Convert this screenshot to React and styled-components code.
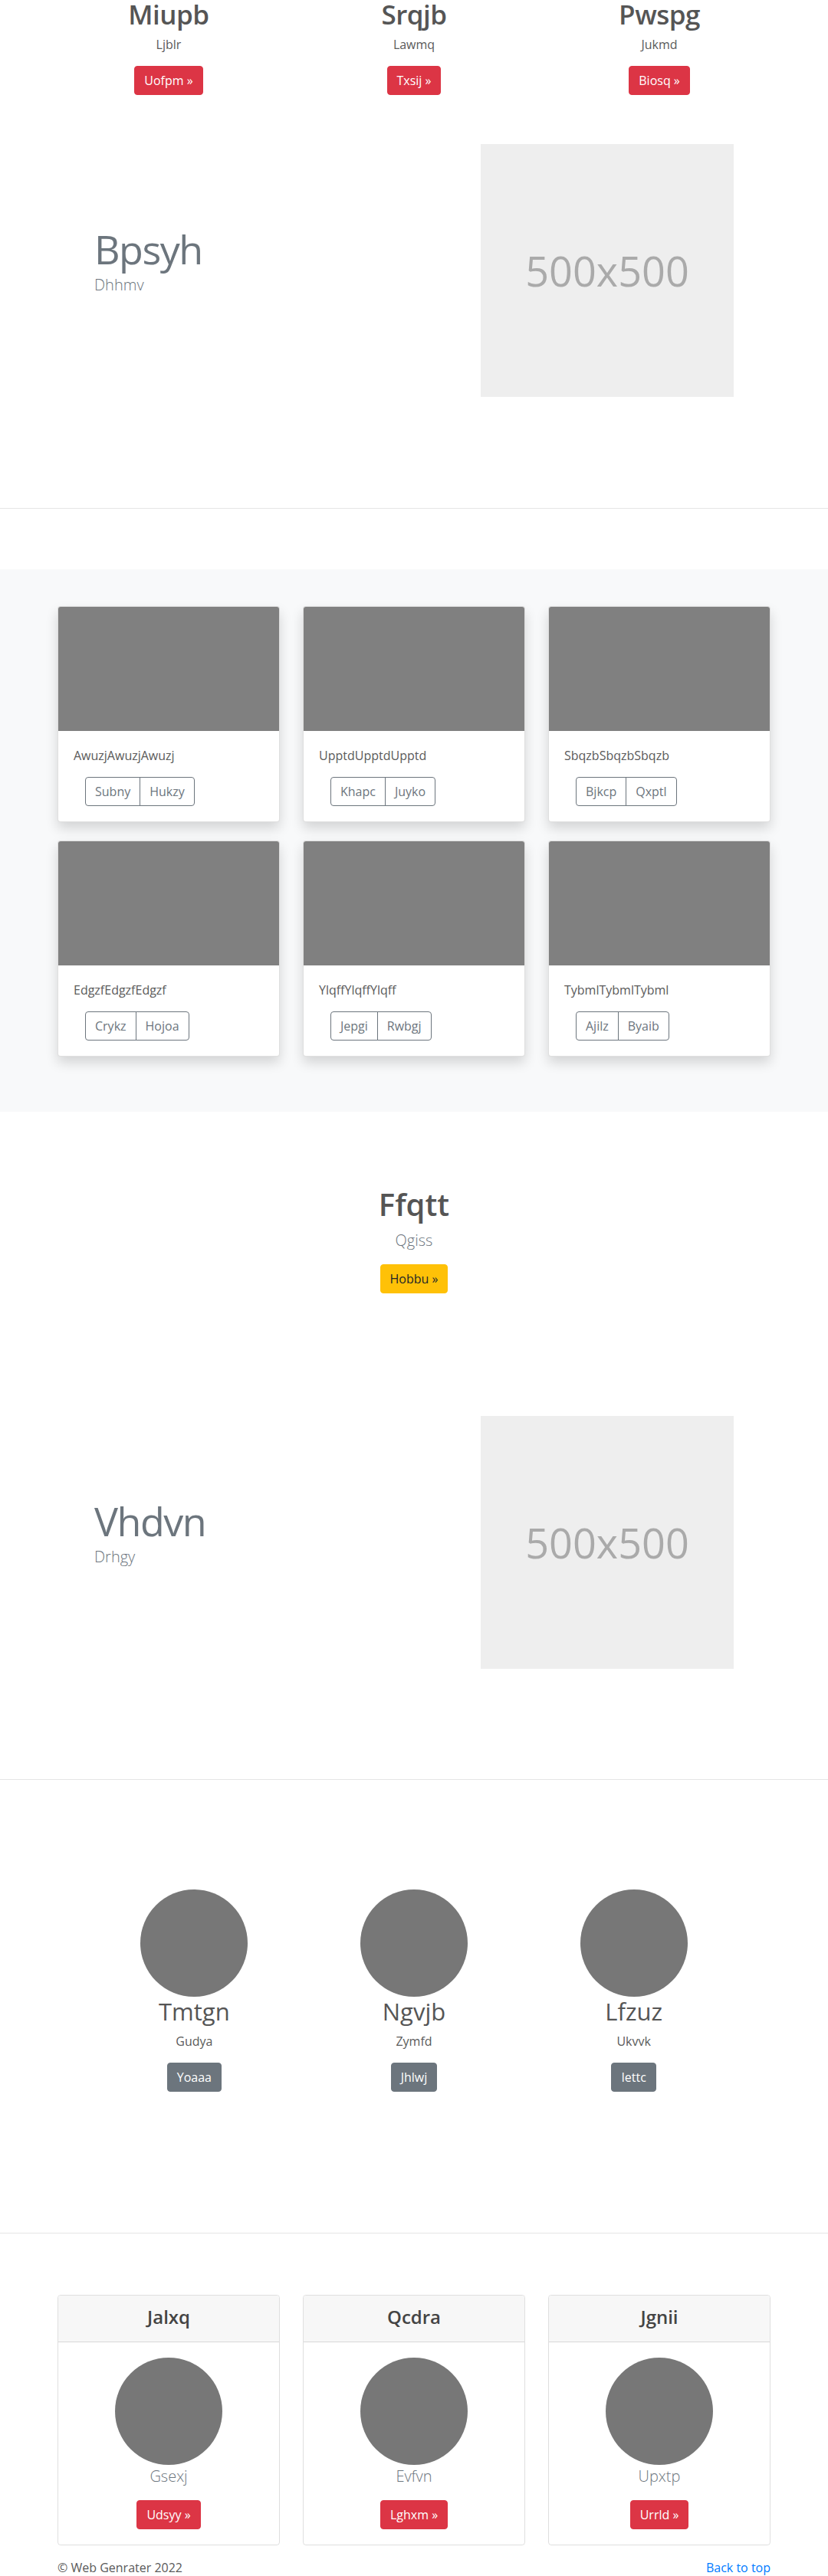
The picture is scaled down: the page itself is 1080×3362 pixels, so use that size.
import React from 'react';
import styled, { createGlobalStyle, css } from 'styled-components';

const GlobalStyle = createGlobalStyle`
  * { box-sizing: border-box; }
  body {
    margin: 0;
    font-family: "Open Sans", "Noto Sans", "Liberation Sans", Arial, sans-serif;
    font-size: 16px;
    line-height: 1.5;
    color: #5a5a5a;
    background: #fff;
  }
`;

const marketing = [
  { title: 'Miupb', text: 'Ljblr', btn: 'Uofpm »' },
  { title: 'Srqjb', text: 'Lawmq', btn: 'Txsij »' },
  { title: 'Pwspg', text: 'Jukmd', btn: 'Biosq »' },
];

const albumCards = [
  { text: 'AwuzjAwuzjAwuzj', a: 'Subny', b: 'Hukzy' },
  { text: 'UpptdUpptdUpptd', a: 'Khapc', b: 'Juyko' },
  { text: 'SbqzbSbqzbSbqzb', a: 'Bjkcp', b: 'Qxptl' },
  { text: 'EdgzfEdgzfEdgzf', a: 'Crykz', b: 'Hojoa' },
  { text: 'YlqffYlqffYlqff', a: 'Jepgi', b: 'Rwbgj' },
  { text: 'TybmlTybmlTybml', a: 'Ajilz', b: 'Byaib' },
];

const team = [
  { name: 'Tmtgn', role: 'Gudya', btn: 'Yoaaa' },
  { name: 'Ngvjb', role: 'Zymfd', btn: 'Jhlwj' },
  { name: 'Lfzuz', role: 'Ukvvk', btn: 'Iettc' },
];

const plans = [
  { head: 'Jalxq', text: 'Gsexj', btn: 'Udsyy »' },
  { head: 'Qcdra', text: 'Evfvn', btn: 'Lghxm »' },
  { head: 'Jgnii', text: 'Upxtp', btn: 'Urrld »' },
];

export default function App() {
  return (
    <Page>
      <GlobalStyle />
      <Container>
        <ThreeCols>
          {marketing.map((m) => (
            <Centered key={m.title}>
              <MarketingTitle>{m.title}</MarketingTitle>
              <BodyText>{m.text}</BodyText>
              <Button $variant="danger">{m.btn}</Button>
            </Centered>
          ))}
        </ThreeCols>

        <Featurette $top={64}>
          <FeatureText>
            <FeatureHeading>Bpsyh</FeatureHeading>
            <Lead>Dhhmv</Lead>
          </FeatureText>
          <Placeholder>500x500</Placeholder>
        </Featurette>
      </Container>

      <Divider $top={145} />

      <AlbumSection>
        <Container>
          <CardGrid>
            {albumCards.map((c) => (
              <AlbumCard key={c.text}>
                <CardImage />
                <CardBody>
                  <BodyText>{c.text}</BodyText>
                  <BtnGroup>
                    <OutlineButton>{c.a}</OutlineButton>
                    <OutlineButton>{c.b}</OutlineButton>
                  </BtnGroup>
                </CardBody>
              </AlbumCard>
            ))}
          </CardGrid>
        </Container>
      </AlbumSection>

      <Container>
        <Hero>
          <HeroTitle>Ffqtt</HeroTitle>
          <HeroLead>Qgiss</HeroLead>
          <Button $variant="warning">Hobbu »</Button>
        </Hero>

        <Featurette $top={160}>
          <FeatureText>
            <FeatureHeading>Vhdvn</FeatureHeading>
            <Lead>Drhgy</Lead>
          </FeatureText>
          <Placeholder>500x500</Placeholder>
        </Featurette>
      </Container>

      <Divider $top={144} />

      <TeamRow>
        {team.map((t) => (
          <Centered key={t.name}>
            <Circle />
            <TeamName>{t.name}</TeamName>
            <BodyText>{t.role}</BodyText>
            <Button $variant="secondary">{t.btn}</Button>
          </Centered>
        ))}
      </TeamRow>

      <Divider $top={184} />

      <Container>
        <PlanGrid>
          {plans.map((p) => (
            <PlanCard key={p.head}>
              <PlanHeader>
                <PlanTitle>{p.head}</PlanTitle>
              </PlanHeader>
              <PlanBody>
                <Circle />
                <PlanText>{p.text}</PlanText>
                <Button $variant="danger">{p.btn}</Button>
              </PlanBody>
            </PlanCard>
          ))}
        </PlanGrid>

        <Footer>
          <FooterText>© Web Genrater 2022</FooterText>
          <BackLink href="#">Back to top</BackLink>
        </Footer>
      </Container>
    </Page>
  );
}

const Page = styled.div`
  width: 1080px;
`;

const Container = styled.div`
  width: 960px;
  margin: 0 auto;
  padding: 0 15px;
`;

const ThreeCols = styled.div`
  display: grid;
  grid-template-columns: repeat(3, 1fr);
  column-gap: 30px;
`;

const Centered = styled.div`
  display: flex;
  flex-direction: column;
  align-items: center;
  text-align: center;
`;

const MarketingTitle = styled.h2`
  margin: 0 0 8px;
  font-size: 35px;
  font-weight: 600;
  line-height: 38px;
  letter-spacing: -0.5px;
  color: #555;
`;

const BodyText = styled.p`
  margin: 0 0 16px;
  font-size: 16px;
  line-height: 24px;
`;

const variants = {
  danger: css`background: #dc3545; border-color: #dc3545; color: #fff;`,
  warning: css`background: #ffc107; border-color: #ffc107; color: #212529;`,
  secondary: css`background: #6c757d; border-color: #6c757d; color: #fff;`,
};

const Button = styled.a`
  display: inline-block;
  padding: 6px 12px;
  border: 1px solid transparent;
  border-radius: 4px;
  font-size: 16px;
  line-height: 24px;
  text-decoration: none;
  cursor: pointer;
  ${(p) => variants[p.$variant]}
`;

const Featurette = styled.div`
  display: flex;
  align-items: center;
  margin-top: ${(p) => p.$top}px;
`;

const FeatureText = styled.div`
  width: 552px;
  padding-left: 48px;
`;

const FeatureHeading = styled.h2`
  margin: 0 0 6px;
  font-size: 52px;
  font-weight: 400;
  line-height: 1;
  letter-spacing: -1.5px;
  color: #6c757d;
`;

const Lead = styled.p`
  margin: 0 0 21px;
  font-size: 20px;
  font-weight: 300;
  line-height: 30px;
  color: #6c757d;
`;

const Placeholder = styled.div`
  width: 330px;
  height: 330px;
  display: flex;
  align-items: center;
  justify-content: center;
  background: #eee;
  color: #aaa;
  font-size: 54px;
`;

const Divider = styled.hr`
  margin: ${(p) => p.$top}px 0 0;
  border: 0;
  border-top: 1px solid #e5e5e5;
`;

const AlbumSection = styled.section`
  margin-top: 79px;
  padding: 48px 0 72px;
  background: #f8f9fa;
`;

const CardGrid = styled.div`
  display: grid;
  grid-template-columns: repeat(3, 1fr);
  gap: 24px 30px;
`;

const AlbumCard = styled.div`
  background: #fff;
  border: 1px solid rgba(0, 0, 0, 0.125);
  border-radius: 4px;
  overflow: hidden;
  box-shadow: 0 8px 16px rgba(0, 0, 0, 0.15);
`;

const CardImage = styled.div`
  height: 162px;
  background: #808080;
`;

const CardBody = styled.div`
  padding: 20px;
`;

const BtnGroup = styled.div`
  display: flex;
  margin-left: 15px;
`;

const OutlineButton = styled.button`
  padding: 6px 12px;
  font-family: inherit;
  font-size: 16px;
  line-height: 24px;
  color: #6c757d;
  background: transparent;
  border: 1px solid #6c757d;
  border-radius: 4px;
  &:first-child {
    border-top-right-radius: 0;
    border-bottom-right-radius: 0;
  }
  & + & {
    margin-left: -1px;
    border-top-left-radius: 0;
    border-bottom-left-radius: 0;
  }
`;

const Hero = styled.div`
  display: flex;
  flex-direction: column;
  align-items: center;
  padding-top: 97px;
`;

const HeroTitle = styled.h1`
  margin: 0 0 8px;
  font-size: 40px;
  font-weight: 600;
  line-height: 48px;
  color: #555;
`;

const HeroLead = styled.p`
  margin: 0 0 16px;
  font-size: 20px;
  font-weight: 300;
  line-height: 30px;
  color: #6c757d;
`;

const TeamRow = styled.div`
  width: 860px;
  margin: 143px auto 0;
  display: grid;
  grid-template-columns: repeat(3, 1fr);
`;

const Circle = styled.div`
  width: 140px;
  height: 140px;
  border-radius: 50%;
  background: #777;
  margin: 0 auto;
`;

const TeamName = styled.h2`
  margin: 0 0 8px;
  font-size: 31px;
  font-weight: 400;
  line-height: 38px;
  color: #555;
`;

const PlanGrid = styled.div`
  margin-top: 80px;
  display: grid;
  grid-template-columns: repeat(3, 1fr);
  column-gap: 30px;
`;

const PlanCard = styled.div`
  border: 1px solid rgba(0, 0, 0, 0.125);
  border-radius: 4px;
  overflow: hidden;
  text-align: center;
`;

const PlanHeader = styled.div`
  padding: 14px 20px 17px;
  background: #f7f7f7;
  border-bottom: 1px solid rgba(0, 0, 0, 0.125);
`;

const PlanTitle = styled.h4`
  margin: 0;
  font-size: 24px;
  font-weight: 600;
  line-height: 28.8px;
  color: #444;
`;

const PlanBody = styled.div`
  padding: 20px;
`;

const PlanText = styled.p`
  margin: 0 0 16px;
  font-size: 20px;
  font-weight: 300;
  line-height: 30px;
  color: #6c757d;
`;

const Footer = styled.footer`
  display: flex;
  justify-content: space-between;
  margin-top: 17px;
  line-height: 24px;
`;

const FooterText = styled.p`
  margin: 0;
`;

const BackLink = styled.a`
  color: #007bff;
  text-decoration: none;
`;
